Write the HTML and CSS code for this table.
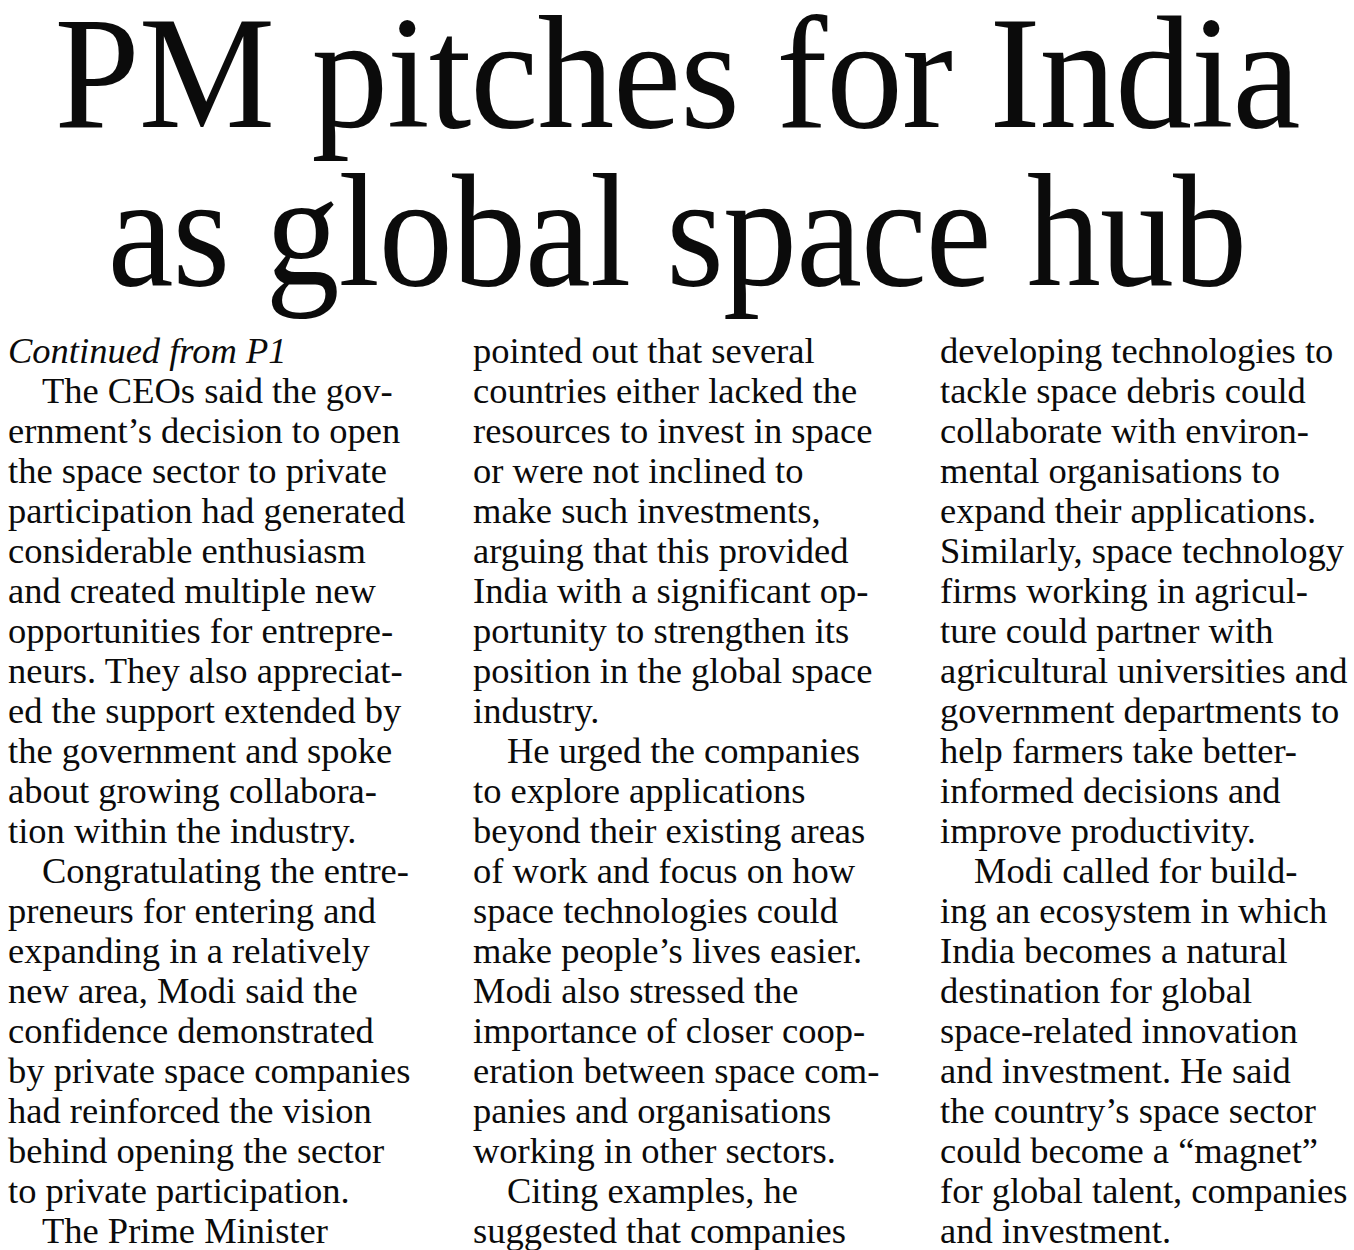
FILE: index.html
```html
<!DOCTYPE html>
<html lang="en">
<head>
<meta charset="utf-8">
<title>PM pitches for India as global space hub</title>
<link rel="stylesheet" href="styles.css">
</head>
<body>
<article class="story">
  <h1 class="headline">
    <span class="hl hl-1">PM pitches for India</span>
    <span class="hl hl-2">as global space hub</span>
  </h1>
  <div class="columns">
    <div class="col">
      <p class="para">
        <span class="ln kicker">Continued from P1</span>
      </p>
      <p class="para">
        <span class="ln ind">The CEOs said the gov-</span>
        <span class="ln">ernment’s decision to open</span>
        <span class="ln">the space sector to private</span>
        <span class="ln">participation had generated</span>
        <span class="ln">considerable enthusiasm</span>
        <span class="ln">and created multiple new</span>
        <span class="ln">opportunities for entrepre-</span>
        <span class="ln">neurs. They also appreciat-</span>
        <span class="ln">ed the support extended by</span>
        <span class="ln">the government and spoke</span>
        <span class="ln">about growing collabora-</span>
        <span class="ln">tion within the industry.</span>
      </p>
      <p class="para">
        <span class="ln ind">Congratulating the entre-</span>
        <span class="ln">preneurs for entering and</span>
        <span class="ln">expanding in a relatively</span>
        <span class="ln">new area, Modi said the</span>
        <span class="ln">confidence demonstrated</span>
        <span class="ln">by private space companies</span>
        <span class="ln">had reinforced the vision</span>
        <span class="ln">behind opening the sector</span>
        <span class="ln">to private participation.</span>
      </p>
      <p class="para">
        <span class="ln ind">The Prime Minister</span>
      </p>
    </div>
    <div class="col">
      <p class="para">
        <span class="ln">pointed out that several</span>
        <span class="ln">countries either lacked the</span>
        <span class="ln">resources to invest in space</span>
        <span class="ln">or were not inclined to</span>
        <span class="ln">make such investments,</span>
        <span class="ln">arguing that this provided</span>
        <span class="ln">India with a significant op-</span>
        <span class="ln">portunity to strengthen its</span>
        <span class="ln">position in the global space</span>
        <span class="ln">industry.</span>
      </p>
      <p class="para">
        <span class="ln ind">He urged the companies</span>
        <span class="ln">to explore applications</span>
        <span class="ln">beyond their existing areas</span>
        <span class="ln">of work and focus on how</span>
        <span class="ln">space technologies could</span>
        <span class="ln">make people’s lives easier.</span>
        <span class="ln">Modi also stressed the</span>
        <span class="ln">importance of closer coop-</span>
        <span class="ln">eration between space com-</span>
        <span class="ln">panies and organisations</span>
        <span class="ln">working in other sectors.</span>
      </p>
      <p class="para">
        <span class="ln ind">Citing examples, he</span>
        <span class="ln">suggested that companies</span>
      </p>
    </div>
    <div class="col">
      <p class="para">
        <span class="ln">developing technologies to</span>
        <span class="ln">tackle space debris could</span>
        <span class="ln">collaborate with environ-</span>
        <span class="ln">mental organisations to</span>
        <span class="ln">expand their applications.</span>
        <span class="ln">Similarly, space technology</span>
        <span class="ln">firms working in agricul-</span>
        <span class="ln">ture could partner with</span>
        <span class="ln">agricultural universities and</span>
        <span class="ln">government departments to</span>
        <span class="ln">help farmers take better-</span>
        <span class="ln">informed decisions and</span>
        <span class="ln">improve productivity.</span>
      </p>
      <p class="para">
        <span class="ln ind">Modi called for build-</span>
        <span class="ln">ing an ecosystem in which</span>
        <span class="ln">India becomes a natural</span>
        <span class="ln">destination for global</span>
        <span class="ln">space-related innovation</span>
        <span class="ln">and investment. He said</span>
        <span class="ln">the country’s space sector</span>
        <span class="ln">could become a “magnet”</span>
        <span class="ln">for global talent, companies</span>
        <span class="ln">and investment.</span>
      </p>
    </div>
  </div>
</article>
</body>
</html>
```

FILE: styles.css
```css
html, body {
  margin: 0;
  padding: 0;
  background: #ffffff;
}

body {
  color: #0b0b0b;
  font-family: "Liberation Serif", "Times New Roman", serif;
  overflow: hidden;
}

.story {
  width: 1354px;
  height: 1250px;
}

.headline {
  margin: 0;
  font-weight: normal;
  font-size: 160px;
  text-align: center;
  letter-spacing: -1px;
}

.hl {
  display: block;
  white-space: nowrap;
  transform-origin: 50% 50%;
}

.hl-1 {
  line-height: 147px;
  transform: scaleX(0.958);
}

.hl-2 {
  line-height: 168px;
  transform: scaleX(0.926);
}

.columns {
  display: grid;
  grid-template-columns: 465px 467px 1fr;
  padding: 16px 0 0 8px;
}

.para {
  margin: 0;
  font-size: 36.5px;
  line-height: 40px;
}

.ln {
  display: block;
  white-space: nowrap;
}

.ind {
  padding-left: 34px;
}

.kicker {
  font-style: italic;
}
```
